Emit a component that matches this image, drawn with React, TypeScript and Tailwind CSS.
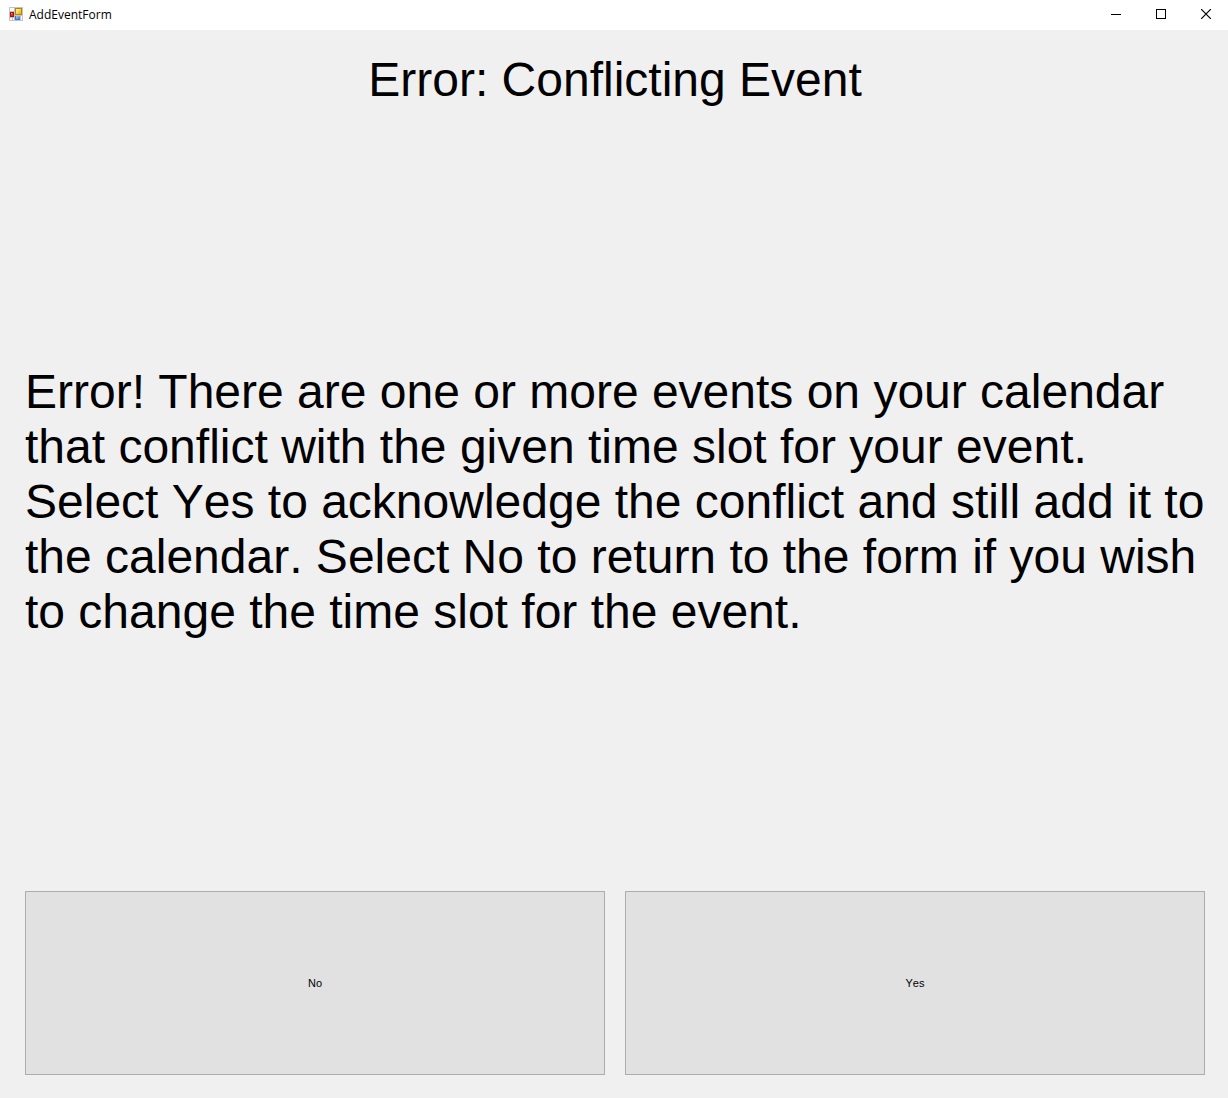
import React from "react";

function AppIcon() {
  return (
    <svg width="14" height="14" viewBox="0 0 14 14" shapeRendering="crispEdges" aria-hidden="true">
      <defs>
        <linearGradient id="yellow" x1="0" y1="0" x2="1" y2="1">
          <stop offset="0" stopColor="#fff3b0" />
          <stop offset="0.5" stopColor="#fbd54c" />
          <stop offset="1" stopColor="#e3a80c" />
        </linearGradient>
        <linearGradient id="blue" x1="0" y1="0" x2="1" y2="1">
          <stop offset="0" stopColor="#a9cdfb" />
          <stop offset="1" stopColor="#3b78dc" />
        </linearGradient>
      </defs>
      <rect width="14" height="14" fill="#c3c3c3" />
      <rect x="1" y="1" width="4" height="3" fill="#fff" />
      <rect x="1" y="11" width="2" height="2" fill="#fff" />
      <rect x="4" y="11" width="1" height="2" fill="#fff" />
      <rect x="12" y="9" width="1" height="4" fill="#fff" />
      <rect x="1" y="5" width="4" height="5" fill="#a51212" />
      <rect x="2" y="6" width="2" height="3" fill="#d93a2e" />
      <rect x="2" y="6" width="1" height="1" fill="#f39a8e" />
      <rect x="6" y="1" width="7" height="7" fill="#b98308" />
      <rect x="7" y="2" width="5" height="5" fill="url(#yellow)" />
      <rect x="6" y="9" width="5" height="4" fill="#3f74d6" />
      <rect x="7" y="9" width="4" height="3" fill="url(#blue)" />
    </svg>
  );
}

export default function App() {
  return (
    <div className="flex min-h-screen flex-col bg-[#f0f0f0] font-['Liberation_Sans',Arial,sans-serif] text-black">
      <header className="flex h-[30px] items-center bg-white pl-[9px]">
        <div className="flex flex-1 items-center gap-1.5">
          <div className="pb-0.5">
            <AppIcon />
          </div>
          <span className="font-['Open_Sans',sans-serif] text-[12px]">AddEventForm</span>
        </div>
        <button type="button" aria-label="Minimize" className="flex h-full w-[45px] items-center justify-center pb-0.5">
          <svg width="10" height="10" shapeRendering="crispEdges"><path d="M0 5.5H10" stroke="#000" /></svg>
        </button>
        <button type="button" aria-label="Maximize" className="flex h-full w-[45px] items-center justify-center pb-0.5">
          <svg width="10" height="10" shapeRendering="crispEdges"><path d="M.5 .5H9.5V9.5H.5Z" stroke="#000" fill="none" /></svg>
        </button>
        <button type="button" aria-label="Close" className="flex h-full w-[45px] items-center justify-center pb-0.5">
          <svg width="10" height="10"><path d="M0 0L10 10M10 0L0 10" stroke="#000" strokeWidth="1.2" /></svg>
        </button>
      </header>
      <main className="flex flex-1 flex-col pt-[22px] pr-[23px] pb-[23px] pl-[25px] [font-kerning:none]">
        <h1 className="text-center text-[48px] leading-[55px]">Error: Conflicting Event</h1>
        <div className="flex flex-1 items-center pt-1">
          <p className="text-[48px] leading-[55px]">
            Error! There are one or more events on your calendar that conflict with the given time slot for your event.
            Select Yes to acknowledge the conflict and still add it to the calendar. Select No to return to the form if
            you wish to change the time slot for the event.
          </p>
        </div>
        <div className="grid grid-cols-2 gap-5">
          <button type="button" className="h-[184px] border border-[#adadad] bg-[#e1e1e1] text-[11px]">No</button>
          <button type="button" className="h-[184px] border border-[#adadad] bg-[#e1e1e1] text-[11px]">Yes</button>
        </div>
      </main>
    </div>
  );
}
